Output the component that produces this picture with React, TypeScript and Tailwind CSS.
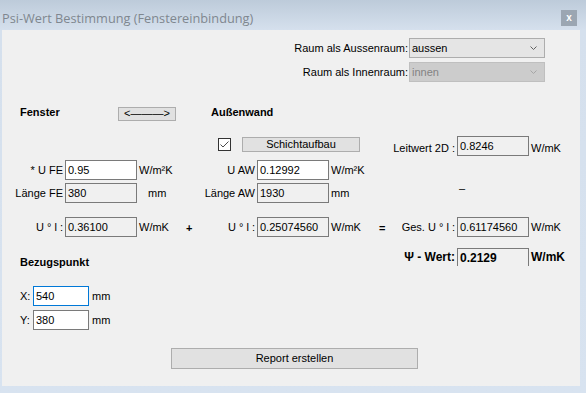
import React from "react";

type FieldProps = {
  value: string;
  editable?: boolean;
  focus?: boolean;
  className?: string;
};

function Field({ value, editable = false, focus = false, className = "w-[72px]" }: FieldProps) {
  return (
    <div
      className={`flex h-[20px] items-center border pl-[2px] ${
        focus ? "border-[#0078d7]" : "border-[#7a7a7a]"
      } ${editable ? "bg-white" : "bg-[#f0f0f0]"} ${className}`}
    >
      {value}
    </div>
  );
}

function Combo({ value, disabled = false }: { value: string; disabled?: boolean }) {
  return (
    <div
      className={`flex h-[20px] w-[136px] items-center justify-between border pl-[2px] pr-[7px] ${
        disabled
          ? "border-[#bfbfbf] bg-[#cccccc] text-[#838383]"
          : "border-[#adadad] bg-[#e5e5e5] text-black"
      }`}
    >
      <span>{value}</span>
      <svg width="7" height="4" viewBox="0 0 7 4">
        <polyline
          points="0.5,0.5 3.5,3.5 6.5,0.5"
          fill="none"
          stroke={disabled ? "#a6a6a6" : "#606060"}
          strokeWidth="1"
        />
      </svg>
    </div>
  );
}

export default function App() {
  return (
    <div className="flex h-[393px] w-[586px] flex-col bg-[linear-gradient(to_bottom,#bdcbda,#d5e0ed_30px,#d8e3f0)] font-['Liberation_Sans',Arial,sans-serif] text-[11px] leading-none text-black">
      {/* title bar */}
      <div className="flex h-[30px] items-center justify-between pl-[2px] pr-[9px] pt-[6px]">
        <span className="font-['Open_Sans',sans-serif] text-[12.75px] text-[#7f878f]">
          Psi-Wert Bestimmung (Fenstereinbindung)
        </span>
        <div className="flex h-[16px] w-[16px] items-center justify-center bg-[#9ba6b2] pb-[1px] text-[10px] font-bold text-white">
          x
        </div>
      </div>

      <div className="ml-[2px] flex h-[356px] w-[578px] flex-col bg-[#f0f0f0]">
        {/* Raum combos */}
        <div className="ml-[278px] mt-[8px] flex flex-col gap-[4px]">
          <div className="flex h-[20px] items-center">
            <span className="w-[129px] pr-[1px] text-right">Raum als Aussenraum:</span>
            <Combo value="aussen" />
          </div>
          <div className="flex h-[20px] items-center">
            <span className="w-[129px] pr-[1px] text-right">Raum als Innenraum:</span>
            <Combo value="innen" disabled />
          </div>
        </div>

        {/* Fenster / Außenwand */}
        <div className="mt-[25px] flex h-[14px] items-start">
          <span className="-mt-[2px] ml-[18px] w-[98px] font-bold leading-[14px]">Fenster</span>
          <div className="flex h-[14px] w-[58px] items-center justify-center border border-[#adadad] bg-[#e1e1e1] pb-[1px]">
            &lt;———&gt;
          </div>
          <span className="-mt-[2px] ml-[35px] font-bold leading-[14px]">Außenwand</span>
        </div>

        {/* Schichtaufbau / Leitwert */}
        <div className="mt-[15px] flex h-[20px] items-start">
          <div className="ml-[216px] mt-[2px] flex h-[13px] w-[13px] items-center justify-center border border-[#333333] bg-white">
            <svg width="9" height="7" viewBox="0 0 9 7">
              <polyline points="0.5,3.5 3,6 8.5,0.5" fill="none" stroke="#4a4a4a" strokeWidth="1" />
            </svg>
          </div>
          <div className="ml-[11px] mt-[1px] flex h-[15px] w-[118px] items-center justify-center border border-[#adadad] bg-[#e1e1e1]">
            Schichtaufbau
          </div>
          <span className="w-[97px] pr-[2px] pt-[2px] text-right leading-[20px]">Leitwert 2D :</span>
          <Field value="0.8246" />
          <span className="pl-[2px] pt-[2px] leading-[20px]">W/mK</span>
        </div>

        {/* U FE / U AW */}
        <div className="mt-[4px] flex h-[20px] items-center">
          <span className="w-[63px] pr-[2px] text-right">* U FE</span>
          <Field value="0.95" editable />
          <span className="w-[66px] pl-[2px]">W/m²K</span>
          <span className="w-[54px] pr-[2px] text-right">U AW</span>
          <Field value="0.12992" editable />
          <span className="pl-[2px]">W/m²K</span>
        </div>

        {/* Länge */}
        <div className="mt-[3px] flex h-[20px] items-center">
          <span className="w-[63px] pr-[2px] text-right">Länge FE</span>
          <Field value="380" />
          <span className="w-[66px] pl-[11px]">mm</span>
          <span className="w-[54px] pr-[2px] text-right">Länge AW</span>
          <Field value="1930" />
          <span className="w-[130px] pl-[2px]">mm</span>
          <span className="self-start leading-[11px]">–</span>
        </div>

        {/* U * l */}
        <div className="mt-[14px] flex h-[20px] items-center">
          <span className="w-[63px] pr-[2px] text-right">U ° l :</span>
          <Field value="0.36100" />
          <span className="w-[45px] pl-[2px]">W/mK</span>
          <span className="w-[21px] pl-[4px] pt-[3px] font-bold">+</span>
          <span className="w-[54px] pr-[2px] text-right">U ° l :</span>
          <Field value="0.25074560" />
          <span className="w-[43px] pl-[2px]">W/mK</span>
          <span className="w-[20px] pl-[7px] pt-[3px] font-bold">=</span>
          <span className="w-[65px] pr-[2px] text-right">Ges. U ° l :</span>
          <Field value="0.61174560" />
          <span className="pl-[2px]">W/mK</span>
        </div>

        {/* Psi-Wert / Bezugspunkt */}
        <div className="mt-[11px] flex h-[18px] items-start">
          <span className="mt-[9px] w-[380px] pl-[18px] font-bold leading-[11px]">Bezugspunkt</span>
          <span className="w-[75px] pr-[2px] text-right text-[12px] font-bold leading-[18px]">Ψ - Wert:</span>
          <div className="flex h-[18px] w-[72px] items-center border-x border-t border-[#7a7a7a] pl-[2px] text-[12px] font-bold">
            0.2129
          </div>
          <span className="pl-[2px] text-[12px] font-bold leading-[18px]">W/mK</span>
        </div>

        {/* X / Y */}
        <div className="mt-[20px] flex h-[20px] items-center">
          <span className="ml-[18px] w-[13px]">X:</span>
          <Field value="540" editable focus className="w-[56px]" />
          <span className="pl-[3px]">mm</span>
        </div>
        <div className="mt-[4px] flex h-[20px] items-center">
          <span className="ml-[18px] w-[13px]">Y:</span>
          <Field value="380" editable className="w-[56px]" />
          <span className="pl-[3px]">mm</span>
        </div>

        <div className="ml-[169px] mt-[18px] flex h-[21px] w-[247px] items-center justify-center border border-[#adadad] bg-[#e1e1e1]">
          Report erstellen
        </div>
      </div>
    </div>
  );
}
